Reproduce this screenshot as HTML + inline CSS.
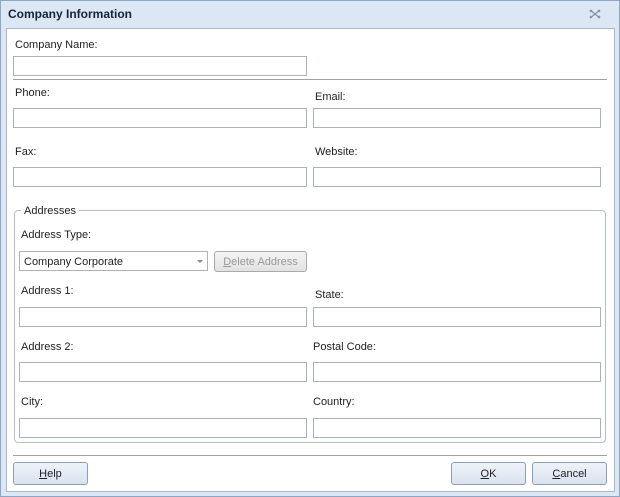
<!DOCTYPE html>
<html><head><style>
body{margin:0;width:620px;height:497px;background:#dce7f5;font-family:"Liberation Sans",sans-serif;font-size:11px;color:#222;position:relative;overflow:hidden}
.a{position:absolute}
.win{position:absolute;left:0;top:0;width:618px;height:495px;border:1px solid #8fa5c4;background:#dce7f5}
.panel{position:absolute;left:6px;top:28px;width:607px;height:462px;background:#fff;border:1px solid #a9b8cc}
.in{position:absolute;height:18px;border:1px solid #a9b2bd;background:#fff}
.l{position:absolute;font-size:11px;margin-top:1px}
.btn{position:absolute;height:21px;border:1px solid #8d9fb7;border-radius:3px;background:linear-gradient(#eef3fa,#d8e2ef);text-align:center;line-height:22px;font-size:11px}
</style></head><body>
<div class="win"></div>
<div class="a" style="left:8px;top:7px;font-weight:bold;font-size:12px;color:#15243a">Company Information</div>
<svg class="a" style="left:589px;top:9px" width="12" height="10"><path d="M1 1L11 9M11 1L1 9M1 3L3 1M9 1L11 3M1 7L3 9M9 9L11 7" stroke="#8a93a2" stroke-width="1.3" fill="none"/></svg>
<div class="panel"></div>
<div class="l" style="left:15px;top:38px">Company Name:</div>
<div class="in" style="left:13px;top:56px;width:292px"></div>
<div class="a" style="left:13px;top:79px;width:594px;height:1px;background:#a0a0a0"></div>
<div class="l" style="left:15px;top:86px">Phone:</div>
<div class="l" style="left:315px;top:90px">Email:</div>
<div class="in" style="left:13px;top:108px;width:292px"></div>
<div class="in" style="left:313px;top:108px;width:286px"></div>
<div class="l" style="left:15px;top:145px">Fax:</div>
<div class="l" style="left:315px;top:145px">Website:</div>
<div class="in" style="left:13px;top:167px;width:292px"></div>
<div class="in" style="left:313px;top:167px;width:286px"></div>
<div class="a" style="left:14px;top:210px;width:590px;height:231px;border:1px solid #b5bfcb;border-radius:4px"></div>
<div class="l" style="left:21px;top:204px;background:#fff;padding:0 3px">Addresses</div>
<div class="l" style="left:21px;top:228px">Address Type:</div>
<div class="in" style="left:19px;top:251px;width:187px"><span style="position:absolute;left:4px;top:4px">Company Corporate</span><span style="position:absolute;right:4px;top:8px;width:0;height:0;border-left:3px solid transparent;border-right:3px solid transparent;border-top:3px solid #888"></span></div>
<div class="btn" style="left:214px;top:251px;width:91px;height:19px;line-height:21px;color:#999;background:linear-gradient(#f4f4f4,#e2e2e2);border-color:#aaa"><u>D</u>elete Address</div>
<div class="l" style="left:21px;top:284px">Address 1:</div>
<div class="l" style="left:315px;top:288px">State:</div>
<div class="in" style="left:19px;top:307px;width:286px"></div>
<div class="in" style="left:313px;top:307px;width:286px"></div>
<div class="l" style="left:21px;top:340px">Address 2:</div>
<div class="l" style="left:313px;top:340px">Postal Code:</div>
<div class="in" style="left:19px;top:362px;width:286px"></div>
<div class="in" style="left:313px;top:362px;width:286px"></div>
<div class="l" style="left:21px;top:395px">City:</div>
<div class="l" style="left:313px;top:395px">Country:</div>
<div class="in" style="left:19px;top:418px;width:286px"></div>
<div class="in" style="left:313px;top:418px;width:286px"></div>
<div class="a" style="left:13px;top:455px;width:594px;height:1px;background:#a0a0a0"></div>
<div class="btn" style="left:13px;top:462px;width:73px"><u>H</u>elp</div>
<div class="btn" style="left:451px;top:462px;width:73px"><u>O</u>K</div>
<div class="btn" style="left:532px;top:462px;width:73px"><u>C</u>ancel</div>
</body></html>
